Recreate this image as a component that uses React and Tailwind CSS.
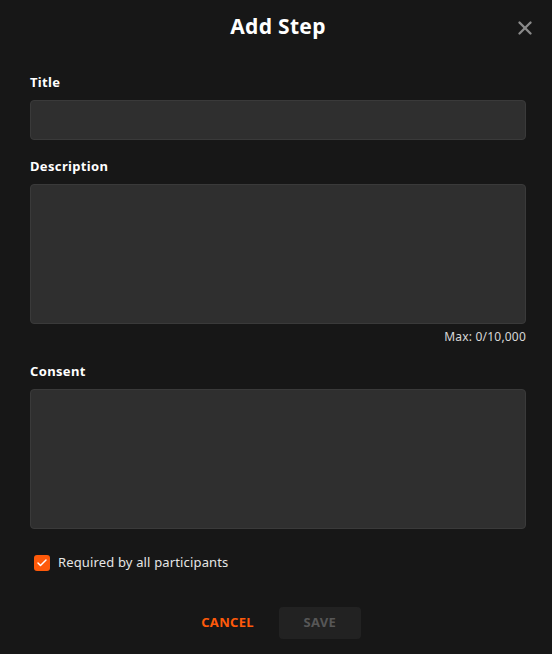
import React, { useState } from "react";
import { X, Check } from "lucide-react";

const FONT = { fontFamily: '"Noto Sans", "DejaVu Sans", sans-serif' };

function Field({ label, tall, className = "" }) {
  return (
    <div className={className}>
      <label className="block text-[13px] font-bold leading-[18px] tracking-[0.35px] text-white">{label}</label>
      {tall ? (
        <textarea className="mt-[9px] block h-[140px] w-full resize-none rounded-[4px] border border-[#3a3a3a] bg-[#2f2f2f] outline-none" />
      ) : (
        <input className="mt-[9px] block h-[40px] w-full rounded-[4px] border border-[#3a3a3a] bg-[#2f2f2f] outline-none" />
      )}
    </div>
  );
}

export default function App() {
  const [required, setRequired] = useState(true);

  return (
    <div className="h-[654px] w-[552px] bg-[#171717]" style={FONT}>
      {/* header */}
      <div className="relative flex h-[54px] items-center justify-center pl-[4px]">
        <h1 className="text-[21px] font-bold tracking-[0.3px] text-white">Add Step</h1>
        <button className="absolute right-[16px] top-[17px] text-[#8a8a8a]">
          <X size={22} strokeWidth={2.6} />
        </button>
      </div>

      <div className="pl-[30px] pr-[26px]">
        <Field label="Title" className="mt-[19px]" />
        <Field label="Description" tall className="mt-[17px]" />
        <p className="mt-[6px] text-right text-[12px] leading-[14px] tracking-[0.2px] text-[#d8d8d8]">Max: 0/10,000</p>
        <Field label="Consent" tall className="mt-[18px]" />

        <label className="mt-[24px] flex items-center gap-[8px] pl-[4px]">
          <span
            onClick={() => setRequired(!required)}
            className="flex h-[16px] w-[16px] items-center justify-center rounded-[3px] bg-[#ff5a0a]"
          >
            {required && <Check size={12} strokeWidth={3} className="text-white" />}
          </span>
          <span className="text-[13px] tracking-[0.15px] text-[#e6e6e6]">Required by all participants</span>
        </label>

        <div className="ml-[6px] mt-[34px] flex items-center justify-center gap-[25px]">
          <button className="text-[13px] font-bold tracking-[0.3px] text-[#ff5a0a]">CANCEL</button>
          <button className="h-[32px] w-[82px] rounded-[4px] bg-[#222222] text-[13px] font-bold tracking-[0.3px] text-[#575757]">SAVE</button>
        </div>
      </div>
    </div>
  );
}
